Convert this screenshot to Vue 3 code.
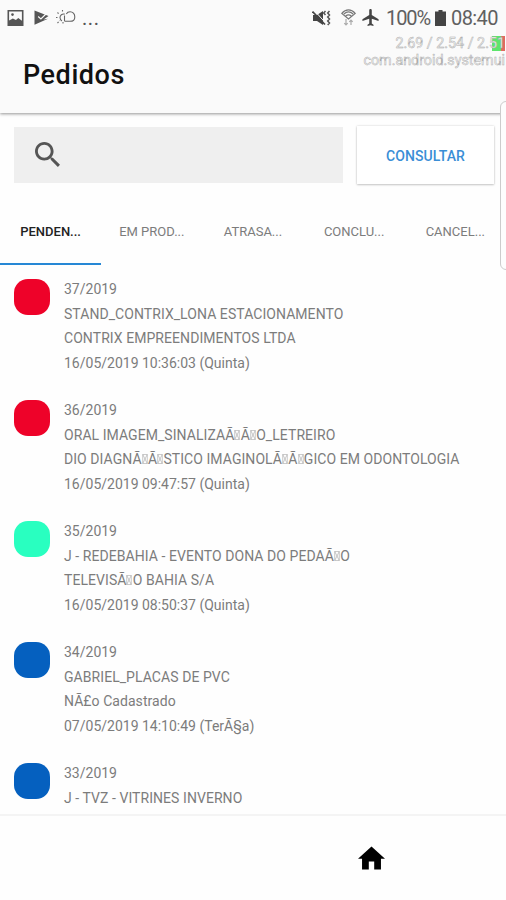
<script setup>
const tabs = ['PENDEN...', 'EM PROD...', 'ATRASA...', 'CONCLU...', 'CANCEL...']

// "|" marks a character with no glyph; it is drawn as a crossed box
const orders = [
  { color: '#ee0229', lines: ['37/2019', 'STAND_CONTRIX_LONA ESTACIONAMENTO', 'CONTRIX EMPREENDIMENTOS LTDA', '16/05/2019 10:36:03 (Quinta)'] },
  { color: '#ee0229', lines: ['36/2019', 'ORAL IMAGEM_SINALIZAÃ|Ã|O_LETREIRO', 'DIO DIAGNÃ|Ã|STICO IMAGINOLÃ|Ã|GICO EM ODONTOLOGIA', '16/05/2019 09:47:57 (Quinta)'] },
  { color: '#29ffc0', lines: ['35/2019', 'J - REDEBAHIA - EVENTO DONA DO PEDAÃ|O', 'TELEVISÃ|O BAHIA S/A', '16/05/2019 08:50:37 (Quinta)'] },
  { color: '#0560bf', lines: ['34/2019', 'GABRIEL_PLACAS DE PVC', 'NÃ£o Cadastrado', '07/05/2019 14:10:49 (TerÃ§a)'] },
  { color: '#0560bf', lines: ['33/2019', 'J - TVZ - VITRINES INVERNO'] },
]
</script>

<template>
  <div class="screen">
    <header class="top">
      <div class="status">
        <div class="notices">
          <svg class="i-photo" viewBox="0 0 16 16"><path fill="#555" fill-rule="evenodd" d="M0 0h16v16H0zM1.6 1.6v8.8l3.800-2 3 1.700 2.400-2 3.600 2.600V1.600z" /><circle cx="5" cy="4.600" r="1.300" fill="#555" /></svg>
          <svg class="i-play" viewBox="0 0 15 15"><path fill="#555" d="M.5.5 14.500 6 9.500 9.500 14 8.800.5 14.800z" /><path d="m4.200 6.500 2.700 2.400 5.600-5.400" fill="none" stroke="#fafafa" stroke-width="1.200" /></svg>
          <svg class="i-weather" viewBox="0 0 20 15"><g fill="none" stroke="#666" stroke-width="1.100"><path d="M8.700 11.300H14c2.900 0 4.800-1.600 4.800-4.400 0-3.100-2.100-5.200-4.700-5.200-1.700 0-3 .8-3.800 2.200" /><path d="M8.700 4.100C6.100 3.600 4 5.100 4 7.500c0 1.500.7 2.700 2 3.400M8.500 5.500v5.800" /><path stroke-dasharray="1.500 1.500" d="M0 7.500h3M1.500 2.500l2 2M6.500 0v3M1.500 13l2.300-2.300M7 12v3" /></g></svg>
          <span class="dots">...</span>
        </div>
        <div class="system">
          <svg class="i-mute" viewBox="0 0 19 16"><path fill="#444" d="M1 5h4l6-4v14l-6-4H1z" /><path stroke="#fafafa" stroke-width="1" d="m2 0 12 13.500" /><path stroke="#444" stroke-width="1.700" d="m.5 1.500 12.500 13" /><path fill="none" stroke="#555" stroke-width="1.500" d="m13.500 1-1.800 2 1.800 2M17.500 1l-1.800 2 1.800 2-1.800 2 1.800 2-1.800 2 1.800 2-1.800 2" /></svg>
          <svg class="i-wifi" viewBox="0 0 15 17"><g fill="none" stroke="#777" stroke-width="1.200"><path d="M.8 4.400c4-4.600 9.400-4.600 13.400 0L7.500 10zM2.900 5c3-2.800 6.200-2.800 9.200 0M4.700 7c1.800-1.600 3.800-1.600 5.600 0" /><path stroke="#aaa" d="M5 10v6M3.300 14.200 5 16l1.700-1.800M10 16v-5M8.300 12.800 10 11l1.700 1.800" /></g></svg>
          <svg class="i-plane" viewBox="2 2 19 20"><path fill="#444" d="M21 16v-2l-8-5V3.500c0-.83-.67-1.500-1.500-1.500S10 2.670 10 3.500V9l-8 5v2l8-2.500V19l-2 1.500V22l3.500-1 3.500 1v-1.500L13 19v-5.500z" /></svg>
          <span class="pct">100%</span>
          <svg class="i-battery" viewBox="0 0 11 16"><path fill="#444" d="M3.500 0h4v1.500H11V16H0V1.500h3.500z" /></svg>
          <span class="clock">08:40</span>
        </div>
      </div>
      <h1>Pedidos</h1>
      <div class="debug">
        <div class="load"><i class="bar-green"></i><i class="bar-red"></i><span>2.69 / 2.54 / 2.51</span></div>
        <div class="proc">com.android.systemui</div>
      </div>
    </header>

    <div class="search-row">
      <div class="search">
        <svg viewBox="3 3 17.500 17.500"><path fill="#555" d="M15.500 14h-.79l-.28-.27C15.410 12.590 16 11.110 16 9.500 16 5.910 13.090 3 9.500 3S3 5.910 3 9.500 5.910 16 9.500 16c1.610 0 3.090-.59 4.230-1.570l.27.28v.79l5 4.990L20.490 19zm-6 0C7.010 14 5 11.990 5 9.500S7.010 5 9.500 5 14 7.010 14 9.500 11.990 14 9.500 14z" /></svg>
      </div>
      <button>CONSULTAR</button>
    </div>

    <nav>
      <div v-for="(tab, i) in tabs" :key="tab" class="tab" :class="{ active: i === 0 }"><span>{{ tab }}</span></div>
    </nav>

    <main>
      <article v-for="order in orders" :key="order.lines[0]">
        <i class="badge" :style="{ background: order.color }"></i>
        <div class="lines">
          <p v-for="(line, n) in order.lines" :key="line" :class="{ name: n === 1 || n === 2 }">
            <template v-for="(part, k) in line.split('|')" :key="k"><svg v-if="k" class="tofu" viewBox="0 0 6 11"><path d="M.5.5h5v10h-5zM.5.5l5 10M5.500.5l-5 10" /></svg>{{ part }}</template>
          </p>
        </div>
      </article>
    </main>

    <footer>
      <svg viewBox="2 3 20 17"><path d="M10 20v-6h4v6h5v-8h3L12 3 2 12h3v8z" /></svg>
    </footer>
    <div class="edge"></div>
  </div>
</template>

<style>
body { margin: 0; background: #fefefe; }
</style>

<style scoped>
.screen { position: relative; display: flex; flex-direction: column; width: 506px; height: 900px; overflow: hidden; background: #fefefe; font-family: Roboto, sans-serif; color: #7c7c7c; }
.top { position: relative; flex: none; box-sizing: border-box; height: 113px; background: #fafafa; box-shadow: 0 1px 3px rgba(0, 0, 0, .42); }
.status { display: flex; justify-content: space-between; height: 35px; padding: 0 7px; }
.notices, .system { display: flex; align-items: center; }
svg { display: block; flex: none; }
.i-photo { width: 17px; height: 16px; margin-right: 10px; }
.i-play { width: 15px; height: 15px; margin-right: 7px; }
.i-weather { width: 20px; height: 15px; margin-right: 6px; }
.dots { font-size: 20px; line-height: 35px; color: #555; letter-spacing: .6px; padding-top: 2px; }
.i-mute { width: 19px; height: 16px; margin-right: 10px; }
.i-wifi { width: 15px; height: 17px; margin-right: 6px; }
.i-plane { width: 17px; height: 17px; margin-right: 7px; }
.i-battery { width: 11px; height: 16px; margin-right: 5px; }
.pct, .clock { font-size: 20px; line-height: 35px; color: #606060; letter-spacing: -.6px; padding-top: 1px; }
.pct { width: 49px; letter-spacing: -1.100px; }
.clock { width: 48px; }
h1 { margin: 0; padding: 23px 0 0 23px; font-size: 27px; line-height: 34px; font-weight: 500; color: #111; letter-spacing: .55px; }
.debug { position: absolute; right: 1px; top: 35px; width: 160px; text-align: right; font-size: 14.300px; line-height: 17px; color: #fafafa; -webkit-text-stroke: .5px #aaa; white-space: nowrap; }
.load { position: relative; }
.load span { position: relative; }
.bar-green, .bar-red { position: absolute; top: 1px; height: 15px; }
.bar-green { right: 4px; width: 9px; background: #5de56c; }
.bar-red { right: 0; width: 4px; background: #e06a60; }
.search-row { display: flex; flex: none; gap: 14px; padding: 13px 12px 0 14px; height: 58px; }
.search { display: flex; align-items: center; width: 329px; height: 56px; margin-top: 1px; background: #efefef; }
.search svg { width: 25px; height: 25px; margin: 0 0 2px 21px; }
button { width: 137px; height: 58px; padding: 2px 0 0; border: 0; background: #fff; box-shadow: 0 0 2px rgba(0, 0, 0, .16), 0 1px 2px rgba(0, 0, 0, .18); color: #3a8ed6; font: 500 14px Roboto, sans-serif; letter-spacing: .1px; }
nav { display: flex; flex: none; height: 81px; }
.tab { display: flex; align-items: center; justify-content: center; box-sizing: border-box; width: 101.200px; padding-top: 15px; border-bottom: 2px solid transparent; font-size: 13px; color: #7c7c7c; }
.tab.active { color: #222; font-weight: 500; border-color: #2687d5; }
main { flex: none; height: 549px; padding: 12px 14px 0; box-sizing: border-box; overflow: hidden; }
article { display: flex; gap: 14px; height: 121px; }
.badge { flex: none; width: 36px; height: 36px; margin-top: 2px; border-radius: 14px; }
p { margin: 0; font-size: 14px; line-height: 24.670px; white-space: nowrap; }
.name { letter-spacing: .06px; }
.tofu { display: inline-block; width: 6px; height: 10px; margin-right: .3px; vertical-align: 0; fill: none; stroke: #aaa; stroke-width: .7; }
footer { flex: none; height: 86px; box-sizing: border-box; border-top: 2px solid #f4f4f4; padding: 30px 0 0 358px; }
footer svg { width: 27px; height: 24px; }
.edge { position: absolute; right: -6px; top: 101px; width: 12px; height: 169px; box-sizing: border-box; border: 1px solid #ccc; border-radius: 7px; background: #fdfdfd; }
</style>
